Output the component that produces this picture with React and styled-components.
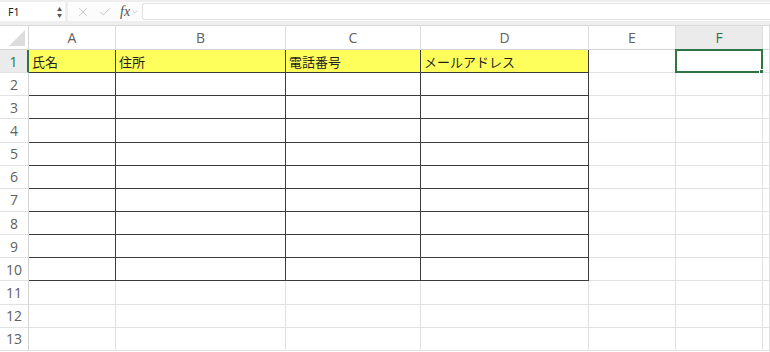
import styled, { createGlobalStyle } from 'styled-components';
import { X, Check, ChevronDown } from 'lucide-react';

const GlobalStyle = createGlobalStyle`
	html, body {
		margin: 0;
		padding: 0;
		background: #ffffff;
		font-family: "Noto Sans", "Noto Sans CJK JP", sans-serif;
	}
	* {
		box-sizing: border-box;
	}
`;

const columns = ['A', 'B', 'C', 'D', 'E', 'F', ''];
const headerTexts = ['氏名', '住所', '電話番号', 'メールアドレス'];
const rows = Array.from({ length: 13 }, (_, i) => i + 1);

const App = () => {
	return (
		<>
			<GlobalStyle />
			<Wrapper>
				<FormulaBar>
					<NameBox>
						<span>F1</span>
						<Spinner>
							<span>▲</span>
							<span>▼</span>
						</Spinner>
					</NameBox>
					<FormulaArea>
						<Tools>
							<X size={14} strokeWidth={1.3} color="#b4b4b4" />
							<Check size={14} strokeWidth={1.3} color="#b4b4b4" />
							<Fx>
								fx
								<ChevronDown size={8} strokeWidth={1.5} color="#a8a8a8" />
							</Fx>
						</Tools>
						<FormulaInput />
					</FormulaArea>
				</FormulaBar>
				<Sheet>
					<Corner>
						<Triangle />
					</Corner>
					{columns.map((c, i) => (
						<ColHeader key={'h' + i} selected={c === 'F'}>
							{c}
						</ColHeader>
					))}
					{rows.map((r) => (
						<Row key={r} r={r} />
					))}
				</Sheet>
			</Wrapper>
		</>
	);
};

const Row = ({ r }) => (
	<>
		<RowHeader selected={r === 1}>{r}</RowHeader>
		{columns.map((c, i) => {
			const inTable = i < 4 && r <= 10;
			return (
				<Cell key={c + i} bordered={inTable} yellow={inTable && r === 1}>
					{r === 1 && headerTexts[i]}
					{r === 1 && c === 'F' && (
						<Selection>
							<Handle />
						</Selection>
					)}
				</Cell>
			);
		})}
	</>
);

const Wrapper = styled.div`
	width: 770px;
	height: 352px;
	overflow: hidden;
	background: #ffffff;
`;

const FormulaBar = styled.div`
	display: flex;
	height: 26px;
	padding: 2px 0 4px;
	gap: 3px;
	background: #eeeeee;
	border-bottom: 1px solid #dadada;
`;

const NameBox = styled.div`
	width: 65px;
	display: flex;
	align-items: center;
	justify-content: space-between;
	padding: 0 3px 0 8px;
	background: #ffffff;
	font-size: 10.5px;
	color: #222;
`;

const Spinner = styled.div`
	display: flex;
	flex-direction: column;
	font-size: 5px;
	line-height: 6px;
	color: #555;
`;

const FormulaArea = styled.div`
	flex: 1;
	display: flex;
	align-items: center;
	background: #fcfcfc;
	padding: 1px 0;
`;

const Tools = styled.div`
	display: flex;
	align-items: center;
	gap: 8px;
	padding: 0 3px 0 8px;
`;

const Fx = styled.span`
	display: flex;
	align-items: center;
	gap: 1px;
	font-family: "Liberation Serif", serif;
	font-style: italic;
	font-size: 14px;
	color: #505050;
`;

const FormulaInput = styled.div`
	flex: 1;
	height: 100%;
	background: #ffffff;
	border: 1px solid #e3e3e3;
	border-right: none;
	border-radius: 3px 0 0 3px;
`;

const Sheet = styled.div`
	display: grid;
	grid-template-columns: 29px 87px 170px 135px 168px 87px 87px 1fr;
	grid-template-rows: 24px repeat(13, 23.15px);
`;

const Corner = styled.div`
	position: relative;
	border-right: 1px solid #d4d4d4;
	border-bottom: 1px solid #d4d4d4;
	background: #ffffff;
`;

const Triangle = styled.div`
	position: absolute;
	right: 3px;
	bottom: 3px;
	width: 0;
	height: 0;
	border-left: 16px solid transparent;
	border-bottom: 16px solid #dcdcdc;
`;

const ColHeader = styled.div`
	display: flex;
	align-items: center;
	justify-content: center;
	font-family: "Open Sans", sans-serif;
	font-weight: 400;
	font-size: 14px;
	color: ${(p) => (p.selected ? '#2e7546' : '#616161')};
	background: ${(p) => (p.selected ? '#ebebeb' : '#ffffff')};
	border-right: 1px solid #dedede;
	border-bottom: 1px solid ${(p) => (p.selected ? '#2e7546' : '#d4d4d4')};
`;

const RowHeader = styled.div`
	display: flex;
	align-items: center;
	justify-content: center;
	font-family: "Open Sans", sans-serif;
	font-weight: 400;
	font-size: 14px;
	color: ${(p) => (p.selected ? '#2e7546' : '#616161')};
	background: ${(p) => (p.selected ? '#ebebeb' : '#ffffff')};
	border-right: ${(p) => (p.selected ? '2px solid #2e7546' : '1px solid #d4d4d4')};
	border-bottom: 1px solid #e1e1e1;
`;

const Cell = styled.div`
	position: relative;
	display: flex;
	align-items: center;
	padding-left: 3px;
	font-family: "Noto Sans CJK JP", sans-serif;
	font-size: 13px;
	color: #1f1f1f;
	white-space: nowrap;
	background: ${(p) => (p.yellow ? '#ffff5c' : '#ffffff')};
	border-right: 1px solid ${(p) => (p.bordered ? '#3c3c3c' : '#e1e1e1')};
	border-bottom: 1px solid ${(p) => (p.bordered ? '#3c3c3c' : '#e1e1e1')};
`;

const Selection = styled.div`
	position: absolute;
	top: -1px;
	left: -1px;
	right: -1px;
	bottom: -1px;
	border: 2px solid #2e7546;
`;

const Handle = styled.div`
	position: absolute;
	right: -4px;
	bottom: -4px;
	width: 6px;
	height: 6px;
	background: #2e7546;
	border: 1px solid #ffffff;
`;

export default App;
